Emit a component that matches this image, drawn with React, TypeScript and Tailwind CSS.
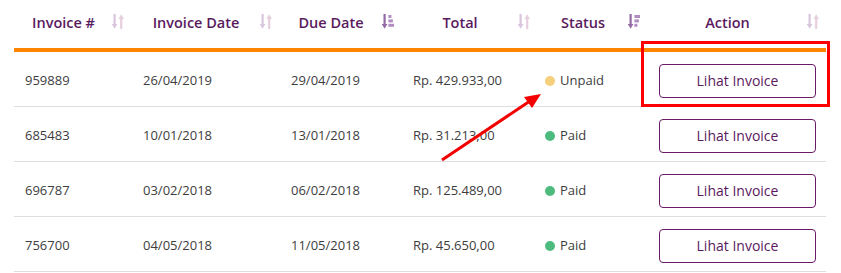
import React from "react";

type SortKind = "none" | "asc" | "desc";

const SortIcon: React.FC<{ kind: SortKind }> = ({ kind }) => {
  if (kind === "none") {
    return (
      <svg width="12" height="17" viewBox="0 0 12 17">
        <rect x="1.5" y="1" width="2.2" height="12" fill="#d9c6de" />
        <polygon points="-0.2,11 5.4,11 2.6,15.8" fill="#d9c6de" />
        <rect x="8.1" y="4" width="2.2" height="12" fill="#e6d0de" />
        <polygon points="6.4,6 12,6 9.2,1.2" fill="#e6d0de" />
      </svg>
    );
  }
  const bars =
    kind === "asc"
      ? [
          [6.4, 2, 3],
          [6.4, 6.4, 4.5],
          [6.4, 10.8, 5.6],
        ]
      : [
          [6.4, 2, 5.6],
          [6.4, 6.4, 4.5],
          [6.4, 10.8, 3],
        ];
  return (
    <svg width="12" height="17" viewBox="0 0 12 17">
      <rect x="1.5" y="1" width="2.2" height="12" fill="#946aa6" />
      <polygon points="-0.2,11 5.4,11 2.6,15.8" fill="#946aa6" />
      {bars.map(([x, y, w], i) => (
        <rect key={i} x={x} y={y} width={w} height="3" fill="#b18dc3" />
      ))}
    </svg>
  );
};

const columns: { label: string; sort: SortKind; width: string }[] = [
  { label: "Invoice #", sort: "none", width: "w-[117px]" },
  { label: "Invoice Date", sort: "none", width: "w-[148px]" },
  { label: "Due Date", sort: "asc", width: "w-[122px]" },
  { label: "Total", sort: "none", width: "w-[136px]" },
  { label: "Status", sort: "desc", width: "w-[110px]" },
  { label: "Action", sort: "none", width: "w-[179px]" },
];

const rows = [
  { no: "959889", date: "26/04/2019", due: "29/04/2019", total: "Rp. 429.933,00", paid: false },
  { no: "685483", date: "10/01/2018", due: "13/01/2018", total: "Rp. 31.213,00", paid: true },
  { no: "696787", date: "03/02/2018", due: "06/02/2018", total: "Rp. 125.489,00", paid: true },
  { no: "756700", date: "04/05/2018", due: "11/05/2018", total: "Rp. 45.650,00", paid: true },
];

export default function App() {
  return (
    <div
      className="relative w-[841px] h-[273px] bg-white overflow-hidden"
      style={{ fontFamily: '"Open Sans", "Noto Sans", sans-serif' }}
    >
      <div className="ml-[14px] w-[812px]">
        <div className="flex h-[52px] border-b-4 border-[#ff8400]">
          {columns.map((c) => (
            <div
              key={c.label}
              className={`${c.width} relative flex items-center justify-center pl-3 pr-[30px] pb-[3px]`}
            >
              <span className="text-[14.5px] font-semibold text-[#5a1a5e]">{c.label}</span>
              <span className="absolute right-[7px] top-[13px]">
                <SortIcon kind={c.sort} />
              </span>
            </div>
          ))}
        </div>
        {rows.map((r) => (
          <div
            key={r.no}
            className="flex h-[55px] pt-[3px] border-b border-[#dedede] text-[13px] text-[#3d3d3d]"
          >
            <div className="w-[117px] flex items-center pl-[11px]">{r.no}</div>
            <div className="w-[148px] flex items-center pl-3">{r.date}</div>
            <div className="w-[122px] flex items-center pl-3">{r.due}</div>
            <div className="w-[136px] flex items-center pl-3">{r.total}</div>
            <div className="w-[110px] flex items-center pl-2 gap-[5px]">
              <span
                className={`w-[10px] h-[10px] rounded-full ${
                  r.paid ? "bg-[#4dbb7e]" : "bg-[#f5cf7b]"
                }`}
              />
              <span>{r.paid ? "Paid" : "Unpaid"}</span>
            </div>
            <div className="w-[179px] flex items-center pl-3">
              <button className="w-[157px] h-[34px] rounded-[4px] border border-[#6a1a68] text-[14px] text-[#5a1a5e] bg-white">
                Lihat Invoice
              </button>
            </div>
          </div>
        ))}
      </div>

      <div className="absolute left-[641px] top-[41px] w-[189px] h-[66px] border-[3px] border-[#ff0000]" />

      <svg className="absolute left-0 top-0" width="841" height="273">
        <line x1="442" y1="160" x2="530" y2="101" stroke="#f30000" strokeWidth="3" />
        <polygon points="541,94 532,108 524,97" fill="#f30000" />
      </svg>
    </div>
  );
}
